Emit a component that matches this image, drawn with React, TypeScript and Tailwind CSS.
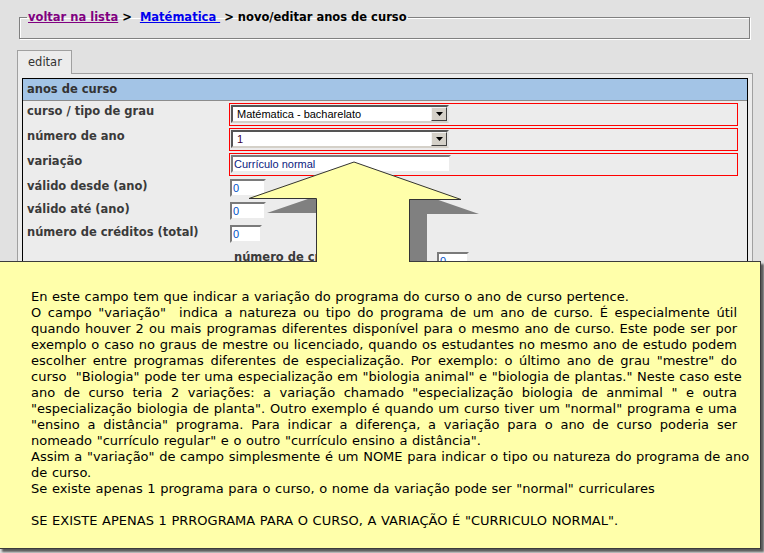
import React from "react";

type Line = { t: string; cls: string };

const J = "whitespace-nowrap text-justify [text-align-last:justify]";
const P = "whitespace-nowrap";

const helpLines: Line[] = [
  { t: "En este campo tem que indicar a variação do programa do curso o ano de curso pertence.", cls: P },
  { t: 'O campo "variação"\u00a0 indica a natureza ou tipo do programa de um ano de curso. É especialmente útil', cls: J },
  { t: "quando houver 2 ou mais programas diferentes disponível para o mesmo ano de curso. Este pode ser por", cls: J },
  { t: "exemplo o caso no graus de mestre ou licenciado, quando os estudantes no mesmo ano de estudo podem", cls: J },
  { t: 'escolher entre programas diferentes de especialização. Por exemplo: o último ano de grau "mestre" do', cls: J },
  { t: 'curso\u00a0 "Biologia" pode ter uma especialização em "biologia animal" e "biologia de plantas." Neste caso este', cls: J },
  { t: 'ano de curso teria 2 variações: a variação chamado "especialização biologia de anmimal " e outra', cls: J },
  { t: '"especialização biologia de planta". Outro exemplo é quando um curso tiver um "normal" programa e uma', cls: J },
  { t: '"ensino a distância" programa. Para indicar a diferença, a variação para o ano de curso poderia ser', cls: J },
  { t: 'nomeado "currículo regular" e o outro "currículo ensino a distância".', cls: P },
  { t: 'Assim a "variação" de campo simplesmente é um NOME para indicar o tipo ou natureza do programa de ano', cls: J },
  { t: "de curso.", cls: P },
  { t: 'Se existe apenas 1 programa para o curso, o nome da variação pode ser "normal" curriculares', cls: P },
  { t: "\u00a0", cls: P },
  { t: 'SE EXISTE APENAS 1 PRROGRAMA PARA O CURSO, A VARIAÇÃO É "CURRICULO NORMAL".', cls: P },
];

function Select({ value, color }: { value: string; color: string }) {
  return (
    <div className="flex h-[18px] w-[218px] border-2 border-t-[#555555] border-l-[#555555] border-r-[#e4e4e4] border-b-[#d4d0c8] bg-white">
      <span
        className={`flex-1 pl-[4px] font-['Liberation_Sans',Arial,sans-serif] text-[11px] leading-[14px] ${color}`}
      >
        {value}
      </span>
      <span className="flex h-[14px] w-[16px] items-center justify-center border border-t-[#f4f4f4] border-l-[#f4f4f4] border-r-[#404040] border-b-[#404040] bg-[#d4d0c8]">
        <svg width="7" height="4" viewBox="0 0 7 4">
          <path d="M0 0h7L3.5 4z" fill="#000" />
        </svg>
      </span>
    </div>
  );
}

function TextInput({ value, width, color }: { value: string; width: string; color: string }) {
  return (
    <div
      className={`h-[18px] ${width} border-2 border-t-[#7a7a7a] border-l-[#7a7a7a] border-r-[#ececec] border-b-[#ececec] bg-white pl-[1px] font-['Liberation_Sans',Arial,sans-serif] text-[11px] leading-[14px] ${color}`}
    >
      {value}
    </div>
  );
}

function RedRow({ label, children }: { label: string; children: React.ReactNode }) {
  return (
    <div className="mt-[2px] flex h-[23px]">
      <div className="w-[206px] pl-[4px] pt-[1px] text-[11.5px] font-bold leading-[15px] text-[#3a3a3a]">{label}</div>
      <div className="h-[23px] w-[509px] border border-solid border-[#ff0000] p-[1px]">{children}</div>
    </div>
  );
}

function PlainRow({ label, children }: { label: string; children: React.ReactNode }) {
  return (
    <div className="flex h-[23px]">
      <div className="w-[206px] pl-[4px] pt-[2px] text-[11.5px] font-bold leading-[15px] text-[#3a3a3a]">{label}</div>
      <div className="pl-[1px] pt-[2px]">{children}</div>
    </div>
  );
}

export default function App() {
  return (
    <div className="relative h-[553px] w-[764px] overflow-hidden bg-[#e1e1e1] font-['DejaVu_Sans',Verdana,sans-serif] text-black">
      {/* breadcrumb */}
      <div className="pl-[19px] pr-[14px] pt-[10px]">
        <fieldset className="border border-[#808080] px-[7px] shadow-[1px_1px_0_#fff,inset_1px_1px_0_#fff]">
          <legend className="px-[1px] text-[11.5px] font-bold leading-[15px]">
            <a className="text-[#800080] underline">voltar na lista</a> &gt;&nbsp;{" "}
            <a className="text-[#0000ee] underline">Matématica&nbsp;</a> &gt; novo/editar anos de curso
          </legend>
          <div className="h-[13px]" />
        </fieldset>
      </div>

      {/* tab + panel */}
      <div className="ml-[17px] mt-[11px] w-[736px]">
        <div className="relative z-10 -mb-px flex h-[24px] w-[55px] items-center border border-b-0 border-[#a0a0a0] bg-[#ececec] pl-[10px] text-[11.5px] text-[#333]">
          editar
        </div>
        <div className="h-[420px] border border-[#a0a0a0] bg-[#ececec] p-[4px]">
          <div className="h-[400px] border border-black bg-[#ececec]">
            <div className="h-[22px] border-b border-[#8c8c8c] bg-[#a3c4e6] pl-[4px] text-[11.5px] font-bold leading-[21px] text-[#333]">
              anos de curso
            </div>
            <RedRow label="curso / tipo de grau">
              <Select value="Matématica - bacharelato" color="text-black" />
            </RedRow>
            <RedRow label="número de ano">
              <Select value="1" color="text-[#3a003a]" />
            </RedRow>
            <RedRow label="variação">
              <TextInput value="Currículo normal" width="w-[220px]" color="text-[#0a1a80]" />
            </RedRow>
            <div className="h-[1px]" />
            <PlainRow label="válido desde (ano)">
              <TextInput value="0" width="w-[36px]" color="text-[#0050c8]" />
            </PlainRow>
            <PlainRow label="válido até (ano)">
              <TextInput value="0" width="w-[36px]" color="text-[#0050c8]" />
            </PlainRow>
            <PlainRow label="número de créditos (total)">
              <TextInput value="0" width="w-[32px]" color="text-[#0050c8]" />
            </PlainRow>
            <div className="flex h-[23px] pl-[211px] pt-[4px]">
              <span className="w-[203px] whitespace-nowrap text-[11.5px] font-bold leading-[15px] text-[#3a3a3a]">
                número de créditos
              </span>
              <div className="pt-[2px]">
                <TextInput value="0" width="w-[32px]" color="text-[#0050c8]" />
              </div>
            </div>
          </div>
        </div>
      </div>

      {/* help tooltip */}
      <div className="absolute left-[-1px] top-[261px] h-[288px] w-[762px] border border-[#3c3c3c] bg-[#ffffaa] pl-[31px] pr-[23px] pt-[27px] text-[13px] leading-[16px] text-black [word-spacing:0.5px] shadow-[3px_3px_2px_rgba(0,0,0,0.6)]">
        {helpLines.map((l, i) => (
          <div key={i} className={l.cls}>
            {l.t}
          </div>
        ))}
      </div>

      {/* arrow pointing at the field */}
      <svg className="pointer-events-none absolute left-0 top-0" width="764" height="553" viewBox="0 0 764 553">
        <polygon points="372,177 479,214 427,214 427,261 334,261 334,213 267,213" fill="#808080" />
        <polygon points="354,162 461,199 409,199 409,262.5 316,262.5 316,198 249,198" fill="#ffffaa" />
        <polyline
          points="316.5,262 316.5,198.5 249,198.5 354,162 461,199.5 409.5,199.5 409.5,262"
          fill="none"
          stroke="#333"
          strokeWidth="1"
        />
      </svg>
    </div>
  );
}
